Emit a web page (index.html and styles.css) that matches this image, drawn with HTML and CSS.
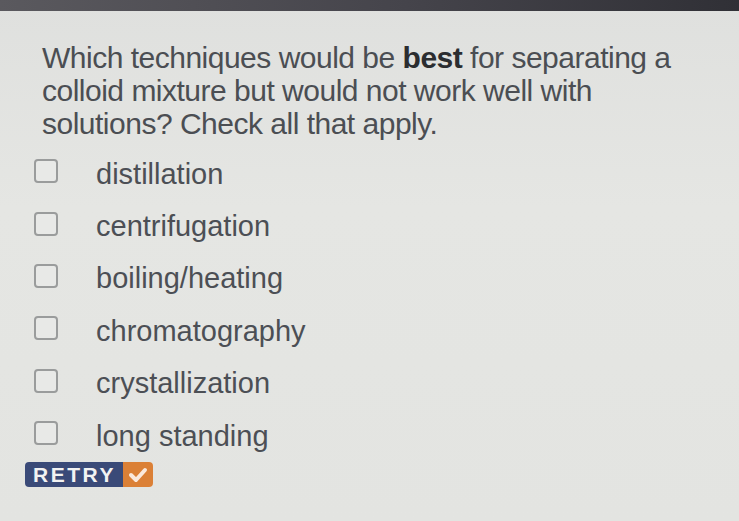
FILE: index.html
```html
<!DOCTYPE html>
<html>
<head>
<meta charset="utf-8">
<link rel="stylesheet" href="styles.css">
</head>
<body>
<div class="topbar"></div>
<main class="content">
  <p class="question">Which techniques would be <b>best</b> for separating a colloid mixture but would not work well with solutions? Check all that apply.</p>
  <ul class="options">
    <li class="option"><span class="box"></span><span class="label">distillation</span></li>
    <li class="option"><span class="box"></span><span class="label">centrifugation</span></li>
    <li class="option"><span class="box"></span><span class="label">boiling/heating</span></li>
    <li class="option"><span class="box"></span><span class="label">chromatography</span></li>
    <li class="option"><span class="box"></span><span class="label">crystallization</span></li>
    <li class="option"><span class="box"></span><span class="label">long standing</span></li>
  </ul>
  <button class="retry"><span class="retry-text">RETRY</span><span class="retry-icon"><svg width="22" height="20" viewBox="0 0 22 20"><path d="M4 10 L9 15 L18 5" fill="none" stroke="#fbe9dc" stroke-width="4" stroke-linecap="round" stroke-linejoin="round"/></svg></span></button>
</main>
</body>
</html>
```
FILE: styles.css
```css
html, body {
  margin: 0;
  padding: 0;
}
body {
  width: 739px;
  height: 521px;
  overflow: hidden;
  background: linear-gradient(180deg, #dfe0de 0%, #e5e6e3 40%, #e3e4e1 100%);
  font-family: "Liberation Sans", Arial, sans-serif;
  color: #4b4e53;
}
.topbar {
  height: 11px;
  background: linear-gradient(90deg, #5a595e, #45444b 55%, #303036);
}
.content {
  padding: 30px 0 0 42px;
}
.question {
  margin: 0;
  font-size: 30px;
  line-height: 33px;
  width: 660px;
  letter-spacing: -0.5px;
}
.question b {
  color: #2b2d30;
  font-weight: bold;
}
.options {
  list-style: none;
  margin: 5px 0 0 -8px;
  padding: 0;
  display: flex;
  flex-direction: column;
}
.option {
  display: flex;
  align-items: center;
  height: 52.4px;
}
.box {
  width: 20px;
  height: 20px;
  border: 2px solid #9a9c9c;
  border-radius: 4px;
  background: #e8e9e7;
  flex: none;
}
.label {
  margin-left: 38px;
  padding-top: 6px;
  font-size: 29px;
  line-height: 29px;
  letter-spacing: 0;
  color: #4c4f55;
}
.retry {
  margin: 3px 0 0 -17px;
  display: flex;
  align-items: stretch;
  height: 25px;
  padding: 0;
  border: none;
  border-radius: 4px;
  overflow: hidden;
  font-family: "Liberation Sans", Arial, sans-serif;
  cursor: pointer;
}
.retry-text {
  background: #3a4a78;
  color: #f2f2f2;
  font-weight: bold;
  font-size: 21px;
  line-height: 25px;
  letter-spacing: 2.5px;
  padding: 0 0 0 8px;
  width: 90px;
  text-align: left;
}
.retry-icon {
  background: #db8036;
  width: 30px;
  display: flex;
  align-items: center;
  justify-content: center;
}
```
